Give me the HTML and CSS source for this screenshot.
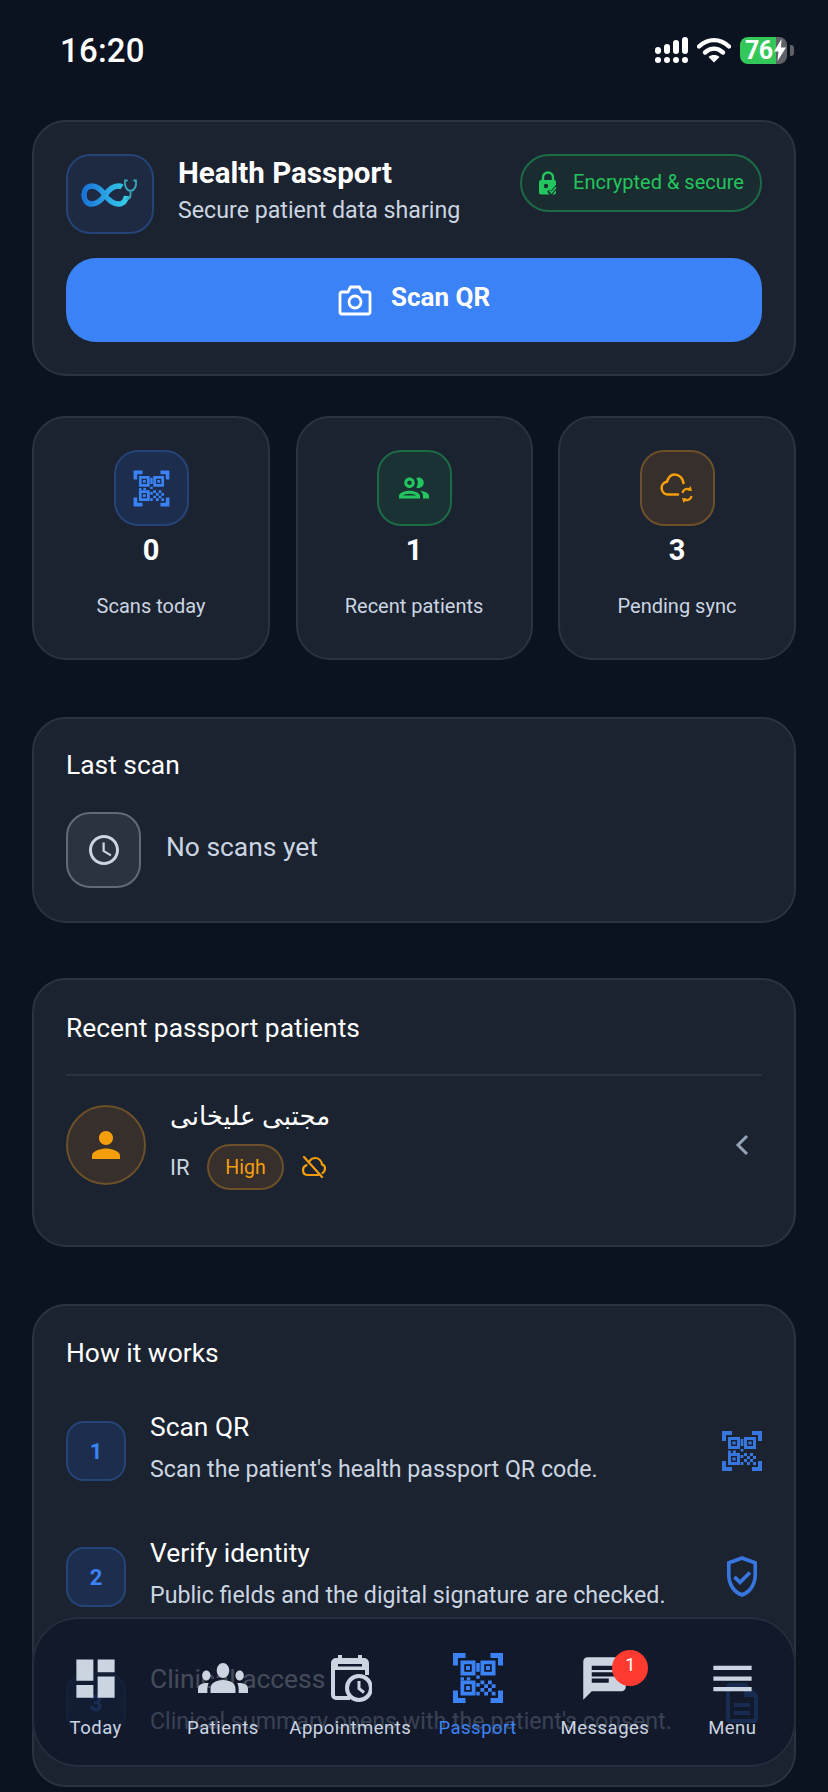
FILE: index.html
```html
<!DOCTYPE html>
<html lang="en">
<head>
<meta charset="utf-8">
<title>Health Passport</title>
<link rel="stylesheet" href="styles.css">
</head>
<body>
<svg class="defs" width="0" height="0" aria-hidden="true">
  <symbol id="qr" viewBox="0 0 24 24">
    <path d="M9.500 6.500v3h-3v-3h3M11 5H5v6h6V5zm-1.500 9.500v3h-3v-3h3M11 13H5v6h6v-6zm6.500-6.500v3h-3v-3h3M19 5h-6v6h6V5zm-6 8h1.500v1.500H13V13zm1.500 1.500H16V16h-1.500v-1.500zM16 13h1.500v1.500H16V13zm-3 3h1.500v1.500H13V16zm1.500 1.500H16V19h-1.500v-1.500zM16 16h1.500v1.500H16V16zm1.500-1.500H19V16h-1.500v-1.500zm0 3H19V19h-1.500v-1.500zM22 7h-2V4h-3V2h5v5zm0 15v-5h-2v3h-3v2h5zM2 22h5v-2H4v-3H2v5zM2 2v5h2V4h3V2H2z"/>
    <path d="M11.300 6h1.400v3.500h-1.400zM5 11.700h1.400v1.300H5zM7.500 11.700h1.400v1.300H7.500zM11.300 11h1.400v1.300h-1.400zM11.300 14h1.400v1.500h-1.400zM11.300 17.500h1.400V19h-1.400zM7.200 7.200h1.600v1.600H7.200zM15.200 7.200h1.600v1.600h-1.600zM7.200 15.200h1.600v1.600H7.200z"/>
  </symbol>
</svg>
<div class="status">
  <span class="time">16:20</span>
  <div class="status-icons">
    <svg class="signal" viewBox="0 0 33 26" width="33" height="26"><g fill="#fff"><rect x="0" y="20" width="6" height="6" rx="3"/><rect x="9" y="20" width="6" height="6" rx="3"/><rect x="18" y="20" width="6" height="6" rx="3"/><rect x="27" y="20" width="6" height="6" rx="3"/><rect x="0" y="10" width="6" height="7" rx="3"/><rect x="9" y="7" width="6" height="10" rx="3"/><rect x="18" y="3" width="6" height="14" rx="3"/><rect x="27" y="0" width="6" height="17" rx="3"/></g></svg>
    <svg class="wifi" viewBox="0 0 34 26" width="34" height="26"><path d="M2 9.500C11 1 23 1 32 9.500" fill="none" stroke="#fff" stroke-width="4.400" stroke-linecap="round"/><path d="M8 15.500c5.500-5 12.500-5 18 0" fill="none" stroke="#fff" stroke-width="4.400" stroke-linecap="round"/><path d="M17 25.500l-5.500-5.500c3-2.600 8-2.600 11 0z" fill="#fff"/></svg>
    <div class="battery"><div class="batt-body"><span class="batt-num">76</span><svg viewBox="0 0 12 22" width="12" height="22"><path d="M7.500 0 0 12.500h4.500L3.500 22 12 8.500H7z" fill="#fff"/></svg></div><i class="batt-nub"></i></div>
  </div>
</div>

<main class="page">
  <section class="card hero">
    <div class="hero-head">
      <div class="tile logo">
        <svg viewBox="0 0 58 30" width="58" height="30">
          <defs><linearGradient id="lg" x1="0" x2="1"><stop offset="0" stop-color="#1b74d8"/><stop offset=".55" stop-color="#2aa5e6"/><stop offset="1" stop-color="#35cbe6"/></linearGradient></defs>
          <path d="M24 16C19 9 15 7 11 7 6 7 3 11 3 16s3 9 8 9c4 0 8-2 13-9s9-9 13-9c1.500 0 3 .3 4 1M24 16c5 7 9 9 13 9 5 0 8-3.500 8.500-8" fill="none" stroke="url(#lg)" stroke-width="5.500"/>
          <path d="M28 17h6l2-5 3 9 2-6h5" fill="none" stroke="#1d2a42" stroke-width="1.300"/>
          <path d="M46 1.500h-2c-.5 5 .5 9.500 5.500 10.500 5-1 6-5.500 5.500-10.500h-2M49.500 12v4c0 2.500-1.500 4-3.500 4" fill="none" stroke="#3aa7bb" stroke-width="1.800" stroke-linecap="round"/>
        </svg>
      </div>
      <div class="hero-text">
        <h1>Health Passport</h1>
        <p>Secure patient data sharing</p>
      </div>
      <div class="secure">
        <svg viewBox="0 0 20 24" width="20" height="24"><path d="M5 10V6.500a5 5 0 0 1 10 0V10" fill="none" stroke="#22c55e" stroke-width="2.400"/><rect x="1" y="9" width="17" height="14.500" rx="2" fill="#22c55e"/><circle cx="8" cy="15" r="2.200" fill="#1a2c30"/><path d="M10.500 19.500l2.500 3 6-7" fill="none" stroke="#1a2c30" stroke-width="3.500"/><path d="M11.500 19.500l2 2.300 4.500-5.500" fill="none" stroke="#22c55e" stroke-width="1.600"/></svg>
        <span>Encrypted &amp; secure</span>
      </div>
    </div>
    <button class="scan-btn" type="button">
      <svg viewBox="0 0 34 32" width="34" height="32"><path d="M2 10a2 2 0 0 1 2-2h6l2.500-5h9l2.500 5h6a2 2 0 0 1 2 2v18a2 2 0 0 1-2 2H4a2 2 0 0 1-2-2z" fill="none" stroke="#fff" stroke-width="2.800" stroke-linejoin="round"/><circle cx="17" cy="18" r="6" fill="none" stroke="#fff" stroke-width="2.800"/></svg>
      <span>Scan QR</span>
    </button>
  </section>

  <section class="stats">
    <div class="card stat">
      <div class="tile t-blue"><svg class="ico-blue" width="43" height="43"><use href="#qr"/></svg></div>
      <b class="stat-num">0</b>
      <span class="stat-label">Scans today</span>
    </div>
    <div class="card stat">
      <div class="tile t-green"><svg viewBox="0 0 24 24" width="36" height="36"><path fill="#22c55e" d="M9 13.750c-2.340 0-7 1.170-7 3.500V19h14v-1.750c0-2.330-4.660-3.500-7-3.500zM4.340 17c.84-.58 2.870-1.250 4.660-1.250s3.820.67 4.660 1.250H4.340zM9 12c1.930 0 3.500-1.570 3.500-3.500S10.930 5 9 5 5.500 6.570 5.500 8.500 7.070 12 9 12zm0-5c.83 0 1.500.67 1.500 1.500S9.830 10 9 10s-1.500-.67-1.500-1.500S8.170 7 9 7zm7.040 6.810c1.160.84 1.960 1.960 1.960 3.440V19h4v-1.750c0-2.020-3.500-3.170-5.960-3.440zM15 12c1.930 0 3.500-1.570 3.500-3.500S16.930 5 15 5c-.54 0-1.040.13-1.500.35.63.89 1 1.980 1 3.150s-.37 2.260-1 3.150c.46.22.96.35 1.500.35z"/></svg></div>
      <b class="stat-num">1</b>
      <span class="stat-label">Recent patients</span>
    </div>
    <div class="card stat">
      <div class="tile t-amber"><svg viewBox="0 0 34 30" width="34" height="30"><path d="M18 21.500H8a6.500 6.500 0 0 1-1-12.900C8.500 4 11 1.500 14.500 1.500 19 1.500 23 5 23.500 10" fill="none" stroke="#f59e0b" stroke-width="2.600" stroke-linecap="round"/><path d="M22.500 20a5 5 0 0 1 7.500-3.500M31.500 23a5 5 0 0 1-7.500 3.500" fill="none" stroke="#f59e0b" stroke-width="2.200"/><path d="M30.500 13l1.500 5-5-.5zM23.500 30l-1.500-5 5 .5z" fill="#f59e0b"/></svg></div>
      <b class="stat-num">3</b>
      <span class="stat-label">Pending sync</span>
    </div>
  </section>

  <section class="card last">
    <h2>Last scan</h2>
    <div class="last-row">
      <div class="tile t-grey"><svg viewBox="0 0 24 24" width="36" height="36"><path fill="#cbd5e1" d="M11.990 2C6.470 2 2 6.480 2 12s4.470 10 9.990 10C17.520 22 22 17.520 22 12S17.520 2 11.990 2zM12 20c-4.420 0-8-3.580-8-8s3.580-8 8-8 8 3.580 8 8-3.580 8-8 8zm.5-13H11v6l5.250 3.150.75-1.230-4.500-2.670z"/></svg></div>
      <span class="empty">No scans yet</span>
    </div>
  </section>

  <section class="card recent">
    <h2>Recent passport patients</h2>
    <div class="divider"></div>
    <div class="patient">
      <div class="avatar"><svg viewBox="0 0 24 24" width="42" height="42"><path fill="#f59e0b" d="M12 12c2.210 0 4-1.790 4-4s-1.790-4-4-4-4 1.790-4 4 1.790 4 4 4zm0 2c-2.670 0-8 1.340-8 4v2h16v-2c0-2.660-5.330-4-8-4z"/></svg></div>
      <div class="patient-info">
        <div class="name" dir="rtl">مجتبی علیخانی</div>
        <div class="meta">
          <span class="country">IR</span>
          <span class="pill">High</span>
          <svg viewBox="0 0 24 22" width="24" height="22"><path d="M8 4.500C9.500 2.500 11.500 2 13 2c4 0 6.500 3 7 6.500 2 .5 3 2 3 4s-1 3.500-2.500 4.500M16 19H6c-3 0-5-2-5-5 0-2.500 1.500-4 3.500-4.800M2 1l18 20" fill="none" stroke="#f59e0b" stroke-width="2.200" stroke-linecap="round"/></svg>
        </div>
      </div>
      <svg class="chev" viewBox="0 0 14 22" width="14" height="22"><path d="M12 2 3 11l9 9" fill="none" stroke="#94a3b8" stroke-width="3"/></svg>
    </div>
  </section>

  <section class="card how">
    <h2>How it works</h2>
    <div class="steps">
      <div class="step">
        <div class="num">1</div>
        <div class="step-text"><h3>Scan QR</h3><p>Scan the patient's health passport QR code.</p></div>
        <svg class="step-icon ico-blue" width="48" height="48"><use href="#qr"/></svg>
      </div>
      <div class="step">
        <div class="num">2</div>
        <div class="step-text"><h3>Verify identity</h3><p>Public fields and the digital signature are checked.</p></div>
        <svg class="step-icon ico-blue" viewBox="0 0 24 24" width="48" height="48"><path d="M12 1.500 4.500 4.300v6.800c0 5.050 3.200 9.760 7.500 10.900 4.300-1.140 7.500-5.850 7.500-10.900V4.300L12 1.500zm5.700 9.600c0 4-2.450 7.700-5.700 8.830-3.250-1.130-5.700-4.820-5.700-8.830V5.600L12 3.500l5.700 2.100v5.500zM8.900 11.300l-1.300 1.300 3.400 3.400 5.600-5.600-1.300-1.300-4.300 4.300z"/></svg>
      </div>
      <div class="step">
        <div class="num">3</div>
        <div class="step-text"><h3>Clinical access</h3><p>Clinical summary opens with the patient's consent.</p></div>
        <svg class="step-icon ico-blue" viewBox="0 0 24 24" width="48" height="48"><path d="M8 16h8v2H8zm0-4h8v2H8zm6-10H6c-1.100 0-2 .9-2 2v16c0 1.100.89 2 1.990 2H18c1.100 0 2-.9 2-2V8l-6-6zm4 18H6V4h7v5h5v11z"/></svg>
      </div>
    </div>
  </section>
</main>

<nav class="nav">
  <a class="nav-item">
    <div class="nav-icon"><svg viewBox="0 0 24 24" width="51" height="51"><path d="M3 13h8V3H3v10zm0 8h8v-6H3v6zm10 0h8V11h-8v10zm0-18v6h8V3h-8z"/></svg></div>
    <span>Today</span>
  </a>
  <a class="nav-item">
    <div class="nav-icon"><svg viewBox="0 0 24 24" width="50" height="60" preserveAspectRatio="none"><path d="M12 12.750c1.630 0 3.070.39 4.240.9 1.080.48 1.760 1.560 1.760 2.730V18H6v-1.610c0-1.180.68-2.260 1.760-2.730 1.170-.52 2.610-.91 4.240-.91zM4 13c1.100 0 2-.9 2-2s-.9-2-2-2-2 .9-2 2 .9 2 2 2zm1.130 1.100C4.760 14.040 4.390 14 4 14c-.99 0-1.930.21-2.780.58C.48 14.900 0 15.620 0 16.430V18h4.500v-1.610c0-.83.23-1.610.63-2.290zM20 13c1.100 0 2-.9 2-2s-.9-2-2-2-2 .9-2 2 .9 2 2 2zm4 3.430c0-.81-.48-1.530-1.220-1.850-.85-.37-1.790-.58-2.780-.58-.39 0-.76.04-1.130.1.4.68.63 1.460.63 2.290V18H24v-1.570zM12 6c1.660 0 3 1.340 3 3s-1.340 3-3 3-3-1.340-3-3 1.340-3 3-3z"/></svg></div>
    <span>Patients</span>
  </a>
  <a class="nav-item">
    <div class="nav-icon"><svg viewBox="-2 0 44 48" width="44" height="48"><path d="M10 1v7M30 1v7" stroke="#cbd5e1" stroke-width="4" fill="none"/><path d="M20 44H6a3 3 0 0 1-3-3V9a3 3 0 0 1 3-3h28a3 3 0 0 1 3 3v12" fill="none" stroke="#cbd5e1" stroke-width="4"/><path d="M3 6h34v10H3z" fill="#cbd5e1"/><path d="M8 10h24v2.500H8z" fill="#111a2e"/><circle cx="29" cy="34" r="12" fill="#111a2e" stroke="#cbd5e1" stroke-width="4"/><path d="M29 27v7.500l5 4" fill="none" stroke="#cbd5e1" stroke-width="3"/></svg></div>
    <span>Appointments</span>
  </a>
  <a class="nav-item active">
    <div class="nav-icon"><svg width="60" height="60"><use href="#qr"/></svg></div>
    <span>Passport</span>
  </a>
  <a class="nav-item">
    <div class="nav-icon"><svg viewBox="0 0 24 24" width="51" height="51"><path d="M20 2H4c-1.100 0-1.990.9-1.990 2L2 22l4-4h14c1.100 0 2-.9 2-2V4c0-1.100-.9-2-2-2zM6 9h12v2H6V9zm8 5H6v-2h8v2zm4-6H6V6h12v2z"/></svg></div>
    <span>Messages</span>
    <b class="badge">1</b>
  </a>
  <a class="nav-item">
    <div class="nav-icon"><svg viewBox="0 0 24 24" width="51" height="51"><path d="M3 18h18v-2H3v2zm0-5h18v-2H3v2zm0-7v2h18V6H3z"/></svg></div>
    <span>Menu</span>
  </a>
</nav>
</body>
</html>
```
FILE: styles.css
```css
* { box-sizing: border-box; margin: 0; padding: 0; }
html, body { height: 1792px; overflow: hidden; }
body {
  position: relative;
  background: #0b1220;
  color: #fff;
  font-family: Roboto, "DejaVu Sans", sans-serif;
}
.defs { position: absolute; }
.status {
  height: 100px;
  padding: 0 34px 0 60px;
  display: flex;
  align-items: center;
  justify-content: space-between;
}
.time { font-size: 33px; font-weight: 500; letter-spacing: .2px; }
.status-icons { display: flex; align-items: center; gap: 9px; }
.battery { display: flex; align-items: center; gap: 3px; }
.batt-body {
  width: 47px; height: 27px;
  border-radius: 8px;
  background: linear-gradient(90deg, #34c759 0 77%, #5f6368 77%);
  display: flex; align-items: center; padding-left: 5px; gap: 1px;
}
.batt-num { font-size: 25px; font-weight: 700; line-height: 27px; letter-spacing: -.5px; }
.batt-nub { width: 4px; height: 11px; background: #5f6368; border-radius: 0 3px 3px 0; }

.page { margin-top: 20px; padding: 0 32px; display: flex; flex-direction: column; }
.card {
  background: #1b2230;
  border: 2px solid #2b3341;
  border-radius: 34px;
}
.tile {
  width: 75px; height: 76px;
  border-radius: 24px;
  border: 2px solid;
  display: flex; align-items: center; justify-content: center;
  flex: none;
}
h2 { font-size: 26.400px; font-weight: 400; line-height: 32px; }
.ico-blue { fill: #3b82f6; }

.hero { height: 256px; padding: 32px 32px 0; }
.hero-head { display: flex; height: 80px; }
.logo { width: 88px; height: 80px; background: #1d2a42; border-color: #254475; }
.hero-text { margin-left: 24px; flex: 1; padding-top: 1px; }
h1 { font-size: 29.500px; font-weight: 700; line-height: 36px; }
.hero-text p { font-size: 23.200px; line-height: 32px; margin-top: 3px; color: #cbd5e1; white-space: nowrap; }
.secure {
  height: 58px; width: 242px;
  border-radius: 29px;
  background: #1a2c30;
  border: 2px solid #1d6a46;
  display: flex; align-items: center; justify-content: center; gap: 15px;
  color: #22c55e; font-size: 20px;
  flex: none;
}
.secure span { margin-top: -3px; }
.scan-btn {
  width: 100%; height: 84px;
  margin-top: 24px;
  border: 0; border-radius: 30px;
  background: #3b82f6; color: #fff;
  display: flex; align-items: center; justify-content: center; gap: 19px;
  font: 700 26px Roboto, sans-serif;
}
.scan-btn span { margin-top: -7px; }

.stats { margin-top: 40px; display: grid; grid-template-columns: 238px 237px 238px; gap: 25.500px; }
.stat {
  height: 244px; padding-top: 32px;
  display: flex; flex-direction: column; align-items: center;
}
.t-blue { background: #1d2d4d; border-color: #254475; }
.t-green { background: #1b3235; border-color: #1d6a46; }
.t-amber { background: #362f2c; border-color: #6b5029; }
.t-grey { background: #2b3341; border-color: #626a76; }
.stat-num { margin-top: 4px; font-size: 29px; line-height: 40px; font-weight: 700; }
.stat-label { margin-top: 22px; font-size: 20px; line-height: 28px; color: #cbd5e1; white-space: nowrap; }

.last { margin-top: 57px; height: 206px; padding: 30px 32px 0; }
.last-row { margin-top: 31px; display: flex; align-items: center; gap: 25px; }
.empty { font-size: 26.400px; color: #cbd5e1; margin-top: -6px; }

.recent { margin-top: 55px; height: 269px; padding: 32px 32px 0; }
.divider { height: 2px; background: #2b3341; margin-top: 30px; }
.patient { margin-top: 24px; display: flex; align-items: center; }
.avatar {
  width: 80px; height: 80px; border-radius: 50%;
  background: #362f2c; border: 2px solid #6b5029;
  display: flex; align-items: center; justify-content: center; flex: none;
}
.patient-info { flex: 1; margin-left: 24px; }
.name { font-size: 26px; line-height: 32px; text-align: left; }
.meta { margin-top: 12px; display: flex; align-items: center; gap: 0; }
.country { font-size: 22px; color: #cbd5e1; width: 37px; }
.pill {
  height: 46px; width: 77px; border-radius: 23px;
  background: #362f2c; border: 2px solid #6b5029;
  color: #f59e0b; font-size: 19.500px;
  display: flex; align-items: center; justify-content: center;
  margin-right: 18px;
}
.chev { margin-right: 13px; }

.how { margin-top: 57px; height: 483px; padding: 31px 32px 0; }
.steps { margin-top: 42px; display: flex; flex-direction: column; gap: 53px; }
.step { display: flex; align-items: center; height: 73px; }
.num {
  width: 60px; height: 60px; border-radius: 18px;
  background: #1d2d4d; border: 2px solid #254475;
  color: #3b82f6; font-size: 22px; font-weight: 700;
  display: flex; align-items: center; justify-content: center;
  flex: none; margin-top: 7px;
}
.step-text { flex: 1; margin-left: 24px; }
h3 { font-size: 26.400px; font-weight: 400; line-height: 32px; }
.step-text p { margin-top: 11px; font-size: 23.200px; line-height: 30px; color: #cbd5e1; white-space: nowrap; }
.step-icon { margin-right: -4px; margin-top: 7px; flex: none; opacity: .88; }

.nav {
  position: absolute;
  left: 32px; top: 1617px;
  width: 764px; height: 150px;
  border-radius: 46px;
  background: rgba(15, 23, 42, .78);
  box-shadow: inset 0 0 0 2px #262e3d;
  display: grid;
  grid-template-columns: repeat(6, 1fr);
}
.nav-item {
  position: relative;
  padding-top: 31px;
  display: flex; flex-direction: column; align-items: center;
  color: #cbd5e1;
  fill: #cbd5e1;
  font-size: 18.500px;
}
.nav-icon { height: 60px; display: flex; align-items: center; justify-content: center; }
.nav-item span { margin-top: 6px; line-height: 28px; letter-spacing: .5px; white-space: nowrap; }
.nav-item.active { color: #3b82f6; fill: #3b82f6; }
.badge {
  position: absolute; top: 33px; left: 71px;
  width: 36px; height: 36px; border-radius: 50%;
  background: #ff3b30; color: #fff;
  font-size: 18px; font-weight: 400;
  display: flex; align-items: center; justify-content: center;
  padding-bottom: 8px;
}
```
